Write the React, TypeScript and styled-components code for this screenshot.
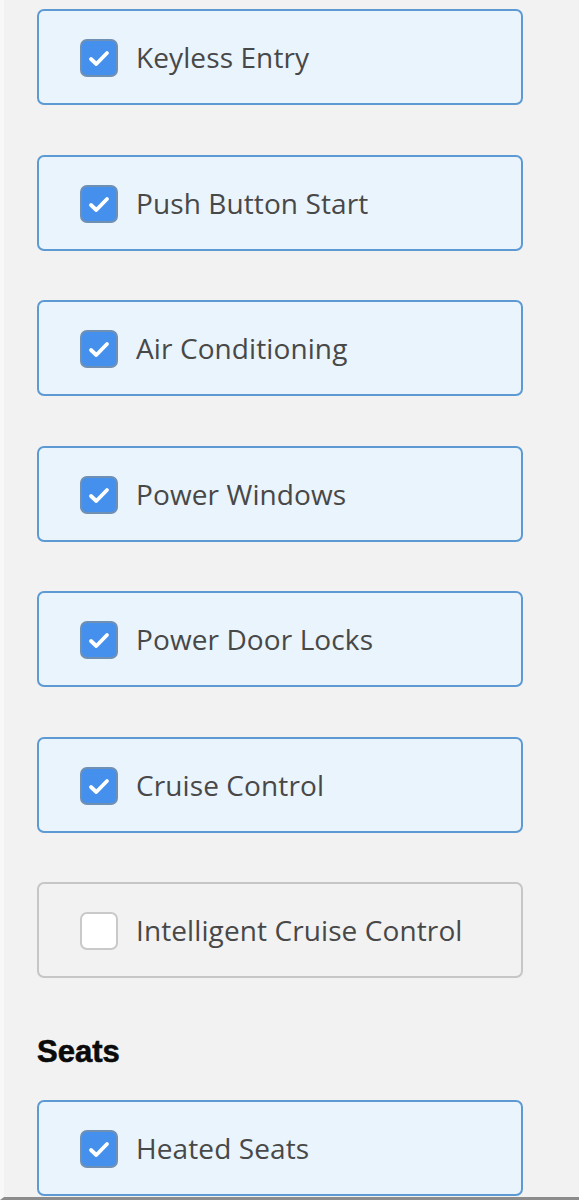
import React from 'react';
import styled, { createGlobalStyle } from 'styled-components';

type Feature = { label: string; checked: boolean };

const GlobalStyle = createGlobalStyle`
  html, body {
    margin: 0;
    padding: 0;
    background: #f2f2f2;
  }
`;

const Page = styled.div`
  background: #f2f2f2;
  border-bottom: 3px solid #8c8c8c;
  border-left: 4px solid #f8f8f8;
  box-sizing: border-box;
  height: 1200px;
  overflow: hidden;
  padding: 9px 0 0 33px;
  width: 579px;
`;

const List = styled.div`
  display: flex;
  flex-direction: column;
  gap: 49.5px;
  width: 486px;
`;

const Card = styled.label<{ $checked: boolean }>`
  align-items: center;
  background: ${({ $checked }) => ($checked ? '#eaf4fc' : '#f2f2f2')};
  border: 2px solid ${({ $checked }) => ($checked ? '#5d9ad3' : '#c6c6c6')};
  border-radius: 7px;
  box-sizing: border-box;
  cursor: pointer;
  display: flex;
  flex: none;
  gap: 18px;
  height: 96px;
  padding: 0 0 0 41px;
`;

const Box = styled.span<{ $checked: boolean }>`
  align-items: center;
  background: ${({ $checked }) => ($checked ? '#4590ec' : '#ffffff')};
  border: 2px solid ${({ $checked }) => ($checked ? '#6f8fb3' : '#c9c9c9')};
  border-radius: 7px;
  box-sizing: border-box;
  display: flex;
  flex: none;
  height: 38px;
  justify-content: center;
  margin-top: 2px;
  width: 38px;
`;

const Label = styled.span`
  color: #484848;
  font-family: 'Open Sans', 'Noto Sans', sans-serif;
  font-size: 28px;
  letter-spacing: 0.1px;
`;

const Heading = styled.h2`
  color: #0b0b0b;
  font-family: 'Liberation Sans', Arial, sans-serif;
  font-size: 31px;
  font-weight: 700;
  line-height: 36px;
  margin: 56px 0 30px 0;
  -webkit-text-stroke: 0.6px #0b0b0b;
`;

const cars: Feature[] = [
  { label: 'Keyless Entry', checked: true },
  { label: 'Push Button Start', checked: true },
  { label: 'Air Conditioning', checked: true },
  { label: 'Power Windows', checked: true },
  { label: 'Power Door Locks', checked: true },
  { label: 'Cruise Control', checked: true },
  { label: 'Intelligent Cruise Control', checked: false },
];

const seats: Feature[] = [{ label: 'Heated Seats', checked: true }];

const Check = () => (
  <svg width="22" height="18" viewBox="0 0 22 18" aria-hidden="true">
    <path d="M3 10 L8.3 15 L19 4" fill="none" stroke="#ffffff" strokeWidth="3.8" strokeLinecap="round" strokeLinejoin="round" />
  </svg>
);

const FeatureRow = ({ label, checked }: Feature) => (
  <Card $checked={checked}>
    <Box $checked={checked}>{checked && <Check />}</Box>
    <Label>{label}</Label>
  </Card>
);

export default function App() {
  return (
    <Page>
      <GlobalStyle />
      <List>
        {cars.map(f => (
          <FeatureRow key={f.label} {...f} />
        ))}
      </List>
      <Heading>Seats</Heading>
      <List>
        {seats.map(f => (
          <FeatureRow key={f.label} {...f} />
        ))}
      </List>
    </Page>
  );
}
